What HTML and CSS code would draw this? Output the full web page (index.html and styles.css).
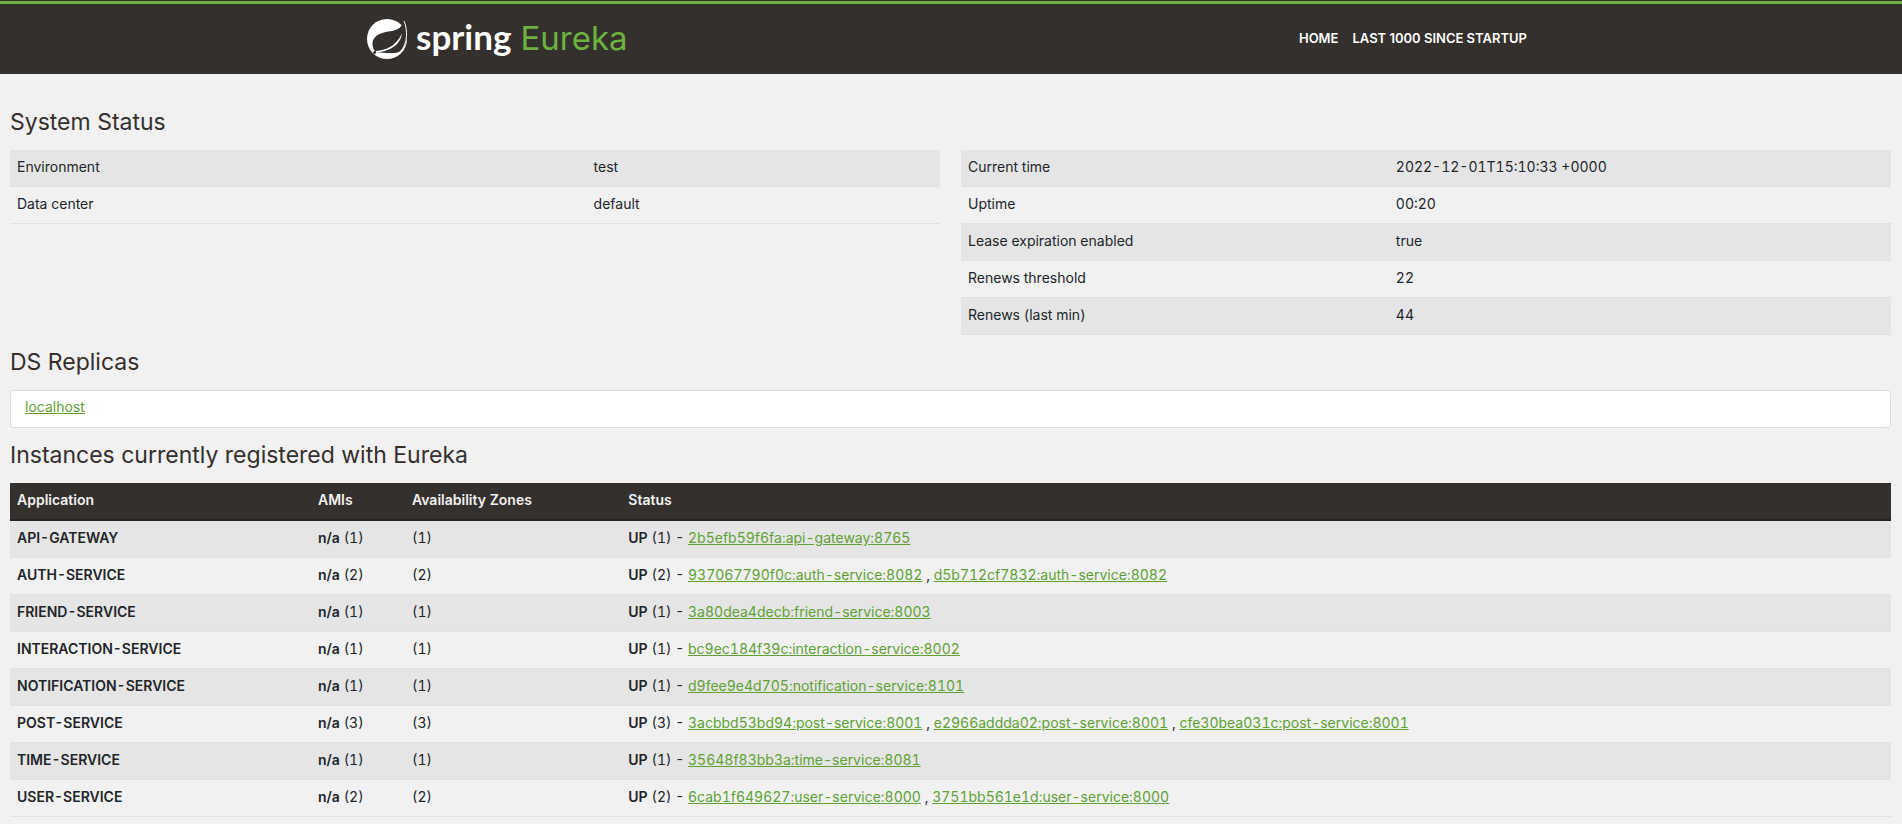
FILE: index.html
```html
<!DOCTYPE html>
<html lang="en">
<head>
<meta charset="utf-8">
<title>Eureka</title>
<link rel="stylesheet" href="styles.css">
</head>
<body>
<header class="navbar">
  <div class="navbar-inner">
    <a class="brand" href="#" aria-label="Spring Eureka">
      <svg class="brand-icon" viewBox="0 0 42 42" aria-hidden="true">
        <circle cx="21" cy="21" r="20" fill="#fff"/>
        <path d="M38 3C35.500 9 32 12 26 13C16 14 7 17 6.500 25C6.300 29 7.500 32 10 34.500C18 35 27 36.500 33 34C43 28 42 13 38 3Z" fill="#34302d"/>
        <path d="M10 33C21 32 30 28 36 15.500C34.500 25 27 33 10 34.500Z" fill="#fff"/>
        <path d="M38 3C41.500 11 42.500 26 33.500 34.500C29 37 20 35 10 35" fill="none" stroke="#fff" stroke-width="1"/>
        <circle cx="8.500" cy="34.500" r="1.500" fill="#34302d"/>
      </svg>
      <span class="brand-text">
        <span class="brand-spring">spring</span>
        <span class="brand-eureka">Eureka</span>
      </span>
    </a>
    <nav class="nav">
      <a href="#">HOME</a>
      <a href="#">LAST 1000 SINCE STARTUP</a>
    </nav>
  </div>
</header>
<main class="content">
  <h1 class="title">System Status</h1>
  <div class="status-grid">
    <table class="table environment">
      <tbody>
        <tr><td class="label">Environment</td><td>test</td></tr>
        <tr><td class="label">Data center</td><td>default</td></tr>
      </tbody>
    </table>
    <table class="table runtime">
      <tbody>
        <tr><td class="label">Current time</td><td>2022-12-01T15:10:33 +0000</td></tr>
        <tr><td class="label">Uptime</td><td>00:20</td></tr>
        <tr><td class="label">Lease expiration enabled</td><td>true</td></tr>
        <tr><td class="label">Renews threshold</td><td>22</td></tr>
        <tr><td class="label">Renews (last min)</td><td>44</td></tr>
      </tbody>
    </table>
  </div>
  <h1 class="title">DS Replicas</h1>
  <ul class="list-group">
    <li><a href="#">localhost</a></li>
  </ul>
  <h1 class="title">Instances currently registered with Eureka</h1>
  <table class="table instances">
    <thead>
      <tr><th class="col-app">Application</th><th class="col-amis">AMIs</th><th class="col-zones">Availability Zones</th><th>Status</th></tr>
    </thead>
    <tbody>
      <tr><td><b>API-GATEWAY</b></td><td><b>n/a</b> (1)</td><td>(1)</td><td><b>UP</b> (1) - <a href="#">2b5efb59f6fa:api-gateway:8765</a></td></tr>
      <tr><td><b>AUTH-SERVICE</b></td><td><b>n/a</b> (2)</td><td>(2)</td><td><b>UP</b> (2) - <a href="#">937067790f0c:auth-service:8082</a> , <a href="#">d5b712cf7832:auth-service:8082</a></td></tr>
      <tr><td><b>FRIEND-SERVICE</b></td><td><b>n/a</b> (1)</td><td>(1)</td><td><b>UP</b> (1) - <a href="#">3a80dea4decb:friend-service:8003</a></td></tr>
      <tr><td><b>INTERACTION-SERVICE</b></td><td><b>n/a</b> (1)</td><td>(1)</td><td><b>UP</b> (1) - <a href="#">bc9ec184f39c:interaction-service:8002</a></td></tr>
      <tr><td><b>NOTIFICATION-SERVICE</b></td><td><b>n/a</b> (1)</td><td>(1)</td><td><b>UP</b> (1) - <a href="#">d9fee9e4d705:notification-service:8101</a></td></tr>
      <tr><td><b>POST-SERVICE</b></td><td><b>n/a</b> (3)</td><td>(3)</td><td><b>UP</b> (3) - <a href="#">3acbbd53bd94:post-service:8001</a> , <a href="#">e2966addda02:post-service:8001</a> , <a href="#">cfe30bea031c:post-service:8001</a></td></tr>
      <tr><td><b>TIME-SERVICE</b></td><td><b>n/a</b> (1)</td><td>(1)</td><td><b>UP</b> (1) - <a href="#">35648f83bb3a:time-service:8081</a></td></tr>
      <tr><td><b>USER-SERVICE</b></td><td><b>n/a</b> (2)</td><td>(2)</td><td><b>UP</b> (2) - <a href="#">6cab1f649627:user-service:8000</a> , <a href="#">3751bb561e1d:user-service:8000</a></td></tr>
    </tbody>
  </table>
</main>
</body>
</html>
```
FILE: styles.css
```css
* {
  box-sizing: border-box;
}

body {
  margin: 0;
  border-top: 1px solid #34302d;
  background: #f1f1f1;
  color: #212529;
  font-family: Inter, "Open Sans", sans-serif;
  font-size: 14px;
  line-height: 21px;
}

.navbar {
  border-top: 3px solid #6db33f;
  background: #34302d;
}

.navbar-inner {
  display: flex;
  align-items: center;
  justify-content: space-between;
  max-width: 1170px;
  min-height: 70px;
  margin: 0 auto;
}

.brand {
  display: flex;
  align-items: center;
  gap: 8px;
  color: #fff;
  text-decoration: none;
}

.brand-icon {
  width: 42px;
  height: 42px;
}

.brand-text {
  display: flex;
  align-items: baseline;
  gap: 9px;
  padding-bottom: 5px;
  line-height: 40px;
}

.brand-spring {
  font-family: Lato, sans-serif;
  font-size: 35px;
  font-weight: 700;
}

.brand-eureka {
  color: #6db33f;
  font-size: 33px;
}

.nav {
  display: flex;
  gap: 14px;
  padding: 0 9px 2px 0;
}

.nav a {
  color: #fff;
  font-size: 13px;
  font-weight: 600;
  text-decoration: none;
}

.content {
  padding: 34px 11px 7px 10px;
}

.title {
  margin: 13px 0 14px;
  color: #34302d;
  font-size: 23px;
  font-weight: 400;
  line-height: 28px;
}

.title:first-child {
  margin-top: 0;
}

.status-grid {
  display: grid;
  grid-template-columns: 1fr 1fr;
  gap: 21px;
  align-items: start;
}

.table {
  width: 100%;
  border-collapse: separate;
  border-spacing: 0;
  font-variant-numeric: tabular-nums;
  table-layout: fixed;
}

.table th,
.table td {
  padding: 6px 7px 9px;
  border-bottom: 1px solid #dee2e6;
  text-align: left;
}

.table tbody tr:nth-child(odd) {
  background: #e5e5e5;
}

.table th {
  border-bottom: 2px solid #212529;
  background: #34302d;
  color: #f1f1f1;
  font-weight: 600;
}

.table b {
  font-weight: 600;
}

.environment .label {
  width: 62%;
}

.runtime .label {
  width: 46%;
}

.col-app {
  width: 16%;
}

.col-amis {
  width: 5%;
}

.col-zones {
  width: 11.5%;
}

.list-group {
  margin: 0;
  padding: 0;
  border: 1px solid #dddddd;
  border-radius: 4px;
  background: #fff;
  list-style: none;
}

.list-group li {
  padding: 5px 14px 10px;
}

.table a,
.list-group a {
  color: #5fa134;
  text-decoration: underline;
}
```
